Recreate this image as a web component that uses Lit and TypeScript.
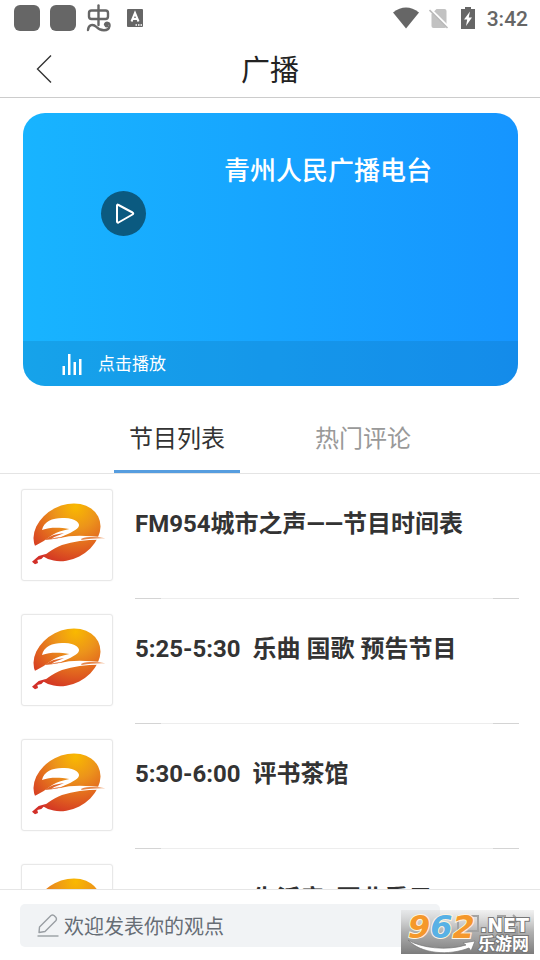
import { LitElement, html, css } from "lit";
import { customElement, state } from "lit/decorators.js";

interface Programme {
  title: string;
}

const PROGRAMMES: Programme[] = [
  { title: "FM954城市之声——节目时间表" },
  { title: "5:25-5:30  乐曲 国歌 预告节目" },
  { title: "5:30-6:00  评书茶馆" },
  { title: "6:00-7:00  生活音  百业看目" },
];

@customElement("status-bar")
class StatusBar extends LitElement {
  static styles = css`
    :host {
      display: flex;
      justify-content: space-between;
      align-items: center;
      height: 36px;
      padding: 0 12px 0 14px;
      color: #666;
      font: 500 21px/36px Roboto, sans-serif;
    }
    .group {
      display: flex;
      align-items: center;
      gap: 10px;
    }
    .app {
      width: 26px;
      height: 26px;
      border-radius: 6px;
      background: #666;
    }
    .time {
      padding-top: 2px;
    }
    svg {
      display: block;
    }
  `;

  render() {
    return html`
      <div class="group">
        <span class="app"></span>
        <span class="app"></span>
        <svg width="26" height="28" viewBox="0 0 26 28" fill="none" stroke="#666" stroke-width="2.4" stroke-linecap="round">
          <rect x="3" y="6.500" width="19" height="8.500" rx="2.500" />
          <path d="M12.500 1.500V21" />
          <path d="M2 26C2.500 20.500 7 19.500 10.500 23C14 27 22.500 28 23.500 22C24 18.500 19.500 17.500 19 20.500" />
          <circle cx="20.500" cy="21.500" r=".8" fill="#666" />
        </svg>
        <svg width="26" height="18" viewBox="0 0 26 18">
          <rect x="5" y="0" width="16" height="18" rx="1" fill="#666" />
          <path d="M9.500 12.500L13 4L16.500 12.500M10.800 10H15.200" fill="none" stroke="#fff" stroke-width="2" />
          <path d="M13.500 16h1.500M16 16h1.500M18.500 16h1.500" stroke="#fff" stroke-width="1.400" />
        </svg>
      </div>
      <div class="group">
        <svg width="26" height="22" viewBox="0 0 26 22">
          <path d="M0 5.500Q13-4.500 26 5.500L13 21.500Z" fill="#666" />
        </svg>
        <svg width="20" height="21" viewBox="0 0 20 21">
          <path d="M7.500 1H15.500Q17.500 1 17.500 3V18Q17.500 20 15.500 20H4.500Q2.500 20 2.500 18V6Z" fill="#c2c2c2" />
          <path d="M1.500 1L19.500 19" stroke="#fff" stroke-width="2" />
          <path d="M.5 2L18.500 20" stroke="#bbb" stroke-width="1.600" />
        </svg>
        <svg width="18" height="22" viewBox="0 0 18 22">
          <path d="M6 0h6v2h4v20H2V2h4Z" fill="#666" />
          <path d="M11 4.500L5 12.500h3.200L7 19L13 10.500H9.700Z" fill="#fff" />
        </svg>
        <span class="time">3:42</span>
      </div>
    `;
  }
}

@customElement("station-logo")
class StationLogo extends LitElement {
  static styles = css`
    :host {
      display: block;
      box-sizing: border-box;
      width: 92px;
      height: 92px;
      border: 1px solid #e8e8e8;
      border-radius: 3px;
      background: #fff;
      box-shadow: 0 0 2px #f0f0f0;
    }
    svg {
      display: block;
    }
  `;

  render() {
    return html`
      <svg width="90" height="90" viewBox="12 12 270 270" aria-hidden="true">
        <defs>
          <radialGradient id="sun" gradientUnits="userSpaceOnUse" cx="205" cy="82" r="190">
            <stop offset="0" stop-color="#f9b900" />
            <stop offset=".35" stop-color="#ec931b" />
            <stop offset=".68" stop-color="#e0601f" />
            <stop offset="1" stop-color="#d02a25" />
          </radialGradient>
        </defs>
        <ellipse cx="147" cy="139" rx="105" ry="81" transform="rotate(-27 147 139)" fill="url(#sun)" />
        <path
          d="M72 132C78 104 108 94 140 96C172 97 190 112 181 124C172 136 148 144 122 157C165 145 205 149 262 154L262 162C215 160 170 166 132 177C104 187 76 208 54 232L30 220L36 186C70 172 86 158 104 146C116 138 132 134 154 129C128 125 100 122 72 132Z"
          fill="#fff"
        />
        <path d="M82 162C96 148 116 144 138 142C124 148 112 150 100 158C118 154 130 153 142 150C120 159 98 160 82 162Z" fill="#e0662a" />
        <path d="M190 158C212 151 236 153 262 157C232 156 214 159 190 162Z" fill="#e78648" />
        <path d="M42 227L62 210L86 203L70 219L58 222L60 231L51 235Z" fill="#d22f28" />
      </svg>
    `;
  }
}

@customElement("site-mark")
class SiteMark extends LitElement {
  static styles = css`
    :host {
      display: block;
      width: 133px;
      height: 44px;
    }
    svg {
      display: block;
    }
    .digits {
      font: italic bold 32px "DejaVu Sans", sans-serif;
      paint-order: stroke;
      stroke: #fff3df;
      stroke-width: 2px;
    }
    .net {
      font: bold 19px "DejaVu Sans", sans-serif;
    }
    .name {
      font: bold 17px "Noto Sans CJK SC", sans-serif;
    }
    .pale {
      fill: #fff;
      paint-order: stroke;
      stroke: #777;
      stroke-width: 2px;
    }
    .orange {
      fill: #f5982b;
    }
    .blue {
      fill: #58b1e5;
    }
  `;

  render() {
    return html`
      <svg width="133" height="44" viewBox="0 0 133 44">
        <defs>
          <linearGradient id="shade" x2="0" y2="1">
            <stop offset="0" stop-color="#bbb" stop-opacity=".2" />
            <stop offset=".5" stop-color="#a2a2a2" stop-opacity=".85" />
            <stop offset="1" stop-color="#7c7c7c" />
          </linearGradient>
        </defs>
        <rect width="133" height="44" fill="url(#shade)" />
        <path d="M7 30C20 38 46 41 65 35L62 33L74 31L70 41L68 38C48 46 20 44 7 30Z" fill="#fff" stroke="#777" stroke-width=".7" />
        <text class="digits" x="7" y="28"><tspan class="orange">9</tspan><tspan class="blue">6</tspan><tspan class="orange">2</tspan></text>
        <text class="net pale" x="79" y="22">.NET</text>
        <text class="name pale" x="77" y="40">乐游网</text>
      </svg>
    `;
  }
}

@customElement("app-root")
class AppRoot extends LitElement {
  @state() private tab = 0;

  static styles = css`
    :host {
      display: flex;
      flex-direction: column;
      height: 100vh;
      overflow: hidden;
      background: #fff;
      color: #333;
      font-family: Roboto, "Noto Sans CJK SC", sans-serif;
    }
    * {
      box-sizing: border-box;
    }
    button {
      padding: 0;
      border: 0;
      background: none;
      color: inherit;
      font: inherit;
      cursor: pointer;
    }
    svg {
      display: block;
    }
    .header {
      display: grid;
      grid-template-columns: 44px 1fr 44px;
      align-items: center;
      flex: none;
      height: 62px;
      padding: 4px 22px 0;
      border-bottom: 1px solid #ccc;
    }
    .back {
      display: flex;
      align-items: center;
      justify-content: center;
      height: 44px;
    }
    .heading {
      margin: 0;
      padding-top: 4px;
      color: #222;
      font-size: 29px;
      font-weight: 400;
      line-height: 40px;
      text-align: center;
    }
    .card {
      display: flex;
      flex-direction: column;
      flex: none;
      height: 273px;
      margin: 15px 22px 0 23px;
      overflow: hidden;
      border-radius: 22px;
      background: linear-gradient(90deg, #18b4ff, #1695ff);
      color: #fff;
    }
    .stage {
      display: grid;
      grid-template-columns: 201px 1fr;
      flex: 1;
    }
    .play {
      align-self: start;
      justify-self: center;
      display: grid;
      place-items: center;
      width: 45px;
      height: 45px;
      margin-top: 78px;
      border-radius: 50%;
      background: #0b5a80;
    }
    .station {
      margin: 39px 0 0;
      font-size: 26px;
      font-weight: 500;
      line-height: 38px;
    }
    .listen {
      display: flex;
      align-items: center;
      gap: 16px;
      height: 45px;
      padding: 0 39px;
      background: rgba(16, 110, 170, 0.25);
      font-size: 17px;
      line-height: 24px;
    }
    .tabs {
      display: flex;
      justify-content: center;
      gap: 60px;
      flex: none;
      height: 88px;
      border-bottom: 1px solid #e4e4e4;
    }
    .tab {
      width: 126px;
      padding-top: 22px;
      border-bottom: 3px solid transparent;
      color: #999;
      font-size: 24px;
      line-height: 36px;
    }
    .tab.picked {
      border-color: #569ddf;
      color: #333;
    }
    .list {
      flex: 1;
      min-height: 0;
      margin: 0;
      padding: 0;
      overflow: hidden;
      list-style: none;
    }
    .row {
      display: flex;
      gap: 22px;
      padding: 15px 21px 0;
    }
    .entry {
      position: relative;
      flex: 1;
      height: 110px;
      padding-top: 17px;
      font-size: 24px;
      font-weight: 700;
      line-height: 36px;
      white-space: pre;
      border-bottom: 1px solid #ededed;
    }
    .entry::after {
      content: "";
      position: absolute;
      inset: auto 0 -1px;
      height: 1px;
      background: linear-gradient(90deg, #d4d4d4 26px, transparent 26px calc(100% - 26px), #d4d4d4 calc(100% - 26px));
    }
    .composer {
      position: relative;
      display: flex;
      align-items: center;
      gap: 16px;
      flex: none;
      height: 71px;
      padding: 0 20px;
      border-top: 1px solid #e6e6e6;
    }
    .field {
      display: flex;
      align-items: center;
      gap: 5px;
      flex: 1;
      height: 43px;
      padding: 0 17px;
      border-radius: 5px;
      background: #f1f3f5;
    }
    .input {
      flex: 1;
      min-width: 0;
      height: 43px;
      padding: 4px 0 0;
      border: 0;
      outline: 0;
      background: none;
      color: #333;
      font: 20px/30px Roboto, "Noto Sans CJK SC", sans-serif;
    }
    .input::placeholder {
      color: #666d75;
      opacity: 1;
    }
    .mark {
      position: absolute;
      right: 6px;
      bottom: 6px;
      pointer-events: none;
    }
  `;

  render() {
    const tabs = ["节目列表", "热门评论"];
    return html`
      <status-bar></status-bar>
      <header class="header">
        <button class="back" aria-label="返回">
          <svg width="16" height="28" viewBox="0 0 16 28" fill="none" stroke="#333" stroke-width="1.400">
            <path d="M15 .5L1.500 14L15 27.500" />
          </svg>
        </button>
        <h1 class="heading">广播</h1>
      </header>

      <section class="card">
        <div class="stage">
          <button class="play" aria-label="播放">
            <svg width="23" height="23" viewBox="0 0 23 23" fill="none" stroke="#fff" stroke-width="2" stroke-linejoin="round">
              <path d="M5 3.500Q5 2 6.500 3L20.500 10.500Q22 11.500 20.500 12.500L6.500 20.500Q5 21 5 19.500Z" />
            </svg>
          </button>
          <h2 class="station">青州人民广播电台</h2>
        </div>
        <button class="listen">
          <svg width="20" height="22" viewBox="0 0 20 22" fill="#fff">
            <path d="M.5 13h2.500v9H.5ZM6 1h2.500v21H6ZM11.500 9h2.500v13h-2.500ZM17 6h2.500v16h-2.500Z" />
          </svg>
          <span>点击播放</span>
        </button>
      </section>

      <nav class="tabs" role="tablist">
        ${tabs.map(
          (label, i) => html`
            <button
              class=${this.tab === i ? "tab picked" : "tab"}
              role="tab"
              aria-selected=${this.tab === i ? "true" : "false"}
              @click=${() => (this.tab = i)}
            >
              ${label}
            </button>
          `
        )}
      </nav>

      <ul class="list">
        ${PROGRAMMES.map(
          (p) => html`<li class="row"><station-logo></station-logo><div class="entry">${p.title}</div></li>`
        )}
      </ul>

      <footer class="composer">
        <label class="field">
          <svg width="22" height="24" viewBox="0 0 22 24" fill="none" stroke="#999ea3" stroke-width="1.400" stroke-linejoin="round">
            <path d="M2 19.500L2.500 14L14 2.500Q15.500 1.500 17 2.500L19 4.500Q20 6 19 7.500L8 18.500L2 19.500Z" />
            <path d="M.5 23H21.500" />
          </svg>
          <input class="input" type="text" placeholder="欢迎发表你的观点" aria-label="发表观点" />
        </label>
        <button aria-label="评论">
          <svg width="24" height="24" viewBox="0 0 24 24" fill="none" stroke="#999" stroke-width="2">
            <path d="M2 3H22V18H13L8 22V18H2Z" />
          </svg>
        </button>
        <button aria-label="分享">
          <svg width="24" height="24" viewBox="0 0 24 24" fill="none" stroke="#999" stroke-width="2">
            <path d="M10 3H2V21H21V13M9 15Q10 7 22 7M17 2L22 7L17 12" />
          </svg>
        </button>
        <site-mark class="mark"></site-mark>
      </footer>
    `;
  }
}
